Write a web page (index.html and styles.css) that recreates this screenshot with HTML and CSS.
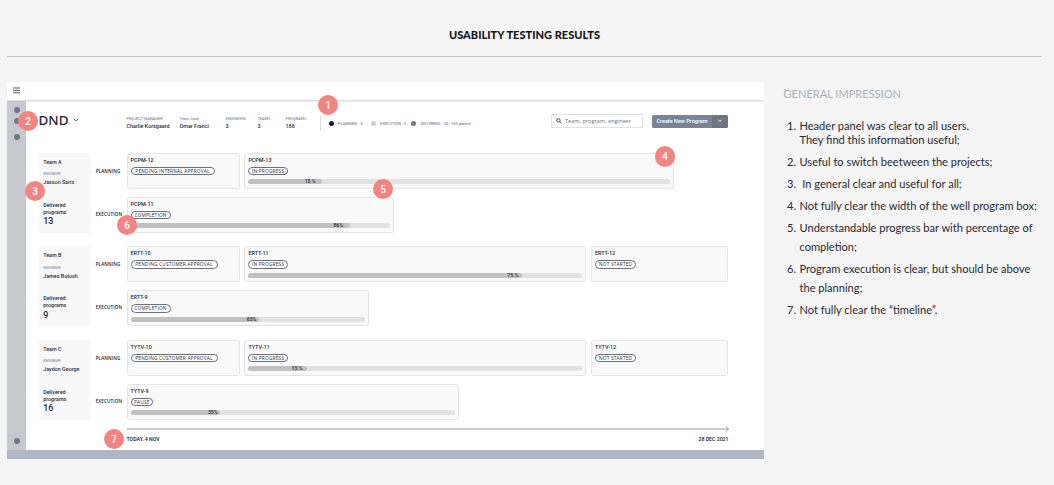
FILE: index.html
```
<!DOCTYPE html>
<html lang="en">
<head>
    <meta charset="UTF-8">
    <meta name="viewport" content="width=device-width, initial-scale=1.0">
    <title>Usability Testing Results</title>
    <link rel="stylesheet" href="styles.css">
</head>
<body>
    <header class="page-header">
        <h1>USABILITY TESTING RESULTS</h1>
    </header>

    <main class="content">
        <div class="app">
            <div class="topbar">
                <svg class="menu" viewBox="0 0 7 7"><path d="M0 1h7M0 3.4h7M0 5.8h7"/></svg>
            </div>

            <div class="app-body">
                <nav class="sidebar">
                    <span class="dot"></span>
                    <span class="dot"></span>
                    <span class="dot"></span>
                    <span class="dot"></span>
                </nav>

                <div class="workspace">
                    <div class="toolbar">
                        <div class="project">DND
                            <svg class="chevron" viewBox="0 0 6 4"><path d="M.7.7 3 3 5.3.7"/></svg>
                        </div>
                        <dl class="meta">
                            <div class="manager"><dt>PROJECT MANAGER</dt><dd>Charlie Korsgaard</dd></div>
                            <div class="lead"><dt>Team Lead</dt><dd>Omar Franci</dd></div>
                            <div class="engineers"><dt>ENGINEERS</dt><dd>3</dd></div>
                            <div class="teams-count"><dt>TEAMS</dt><dd>3</dd></div>
                            <div class="programs"><dt>PROGRAMS</dt><dd>186</dd></div>
                        </dl>
                        <ul class="legend">
                            <li class="planning">PLANNING - 3</li>
                            <li class="execution">EXECUTION - 3</li>
                            <li class="delivered">DELIVERED - 74 / 160 planed</li>
                        </ul>
                        <div class="search">
                            <svg viewBox="0 0 6 6"><circle cx="2.4" cy="2.4" r="1.7"/><path d="M3.7 3.7 5.4 5.4"/></svg>
                            <span>Team, program, engineer</span>
                        </div>
                        <div class="create">
                            <span class="create-label">Create New Program</span>
                            <span class="create-more"><svg class="chevron" viewBox="0 0 6 4"><path d="M1.2.7 3 2.5 4.8.7"/></svg></span>
                        </div>
                    </div>

                    <section class="team">
                        <div class="team-card">
                            <h2>Team A</h2>
                            <small>ENGINEER</small>
                            <p class="name">Jaxson Saris</p>
                            <p class="delivered-label">Delivered<br>programs</p>
                            <p class="count">13</p>
                        </div>
                        <div class="rows">
                            <div class="row">
                                <span class="phase">PLANNING</span>
                                <div class="card w-short"><h3>PCPM-12</h3><span class="pill pill-internal">PENDING INTERNAL APPROVAL</span></div>
                                <div class="card w-wide"><h3>PCPM-13</h3><span class="pill pill-progress">IN PROGRESS</span>
                                    <div class="bar"><div class="fill spaced" style="width: 17.5%">15 %</div></div></div>
                            </div>
                            <div class="row">
                                <span class="phase">EXECUTION</span>
                                <div class="card w-exec-a"><h3>PCPM-11</h3><span class="pill pill-completion">COMPLETION</span>
                                    <div class="bar"><div class="fill spaced" style="width: 84.6%">86%</div></div></div>
                            </div>
                        </div>
                    </section>

                    <section class="team">
                        <div class="team-card">
                            <h2>Team B</h2>
                            <small>ENGINEER</small>
                            <p class="name">James Botosh</p>
                            <p class="delivered-label">Delivered<br>programs</p>
                            <p class="count">9</p>
                        </div>
                        <div class="rows">
                            <div class="row">
                                <span class="phase">PLANNING</span>
                                <div class="card w-short"><h3>ERTT-10</h3><span class="pill pill-customer">PENDING CUSTOMER APPROVAL</span></div>
                                <div class="card w-mid"><h3>ERTT-11</h3><span class="pill pill-progress">IN PROGRESS</span>
                                    <div class="bar"><div class="fill" style="width: 82%">75 %</div></div></div>
                                <div class="card w-last"><h3>ERTT-12</h3><span class="pill pill-waiting">NOT STARTED</span></div>
                            </div>
                            <div class="row">
                                <span class="phase">EXECUTION</span>
                                <div class="card w-exec-b"><h3>ERTT-9</h3><span class="pill pill-completion">COMPLETION</span>
                                    <div class="bar"><div class="fill tight" style="width: 54.8%">65%</div></div></div>
                            </div>
                        </div>
                    </section>

                    <section class="team">
                        <div class="team-card">
                            <h2>Team C</h2>
                            <small>ENGINEER</small>
                            <p class="name">Jaydon George</p>
                            <p class="delivered-label">Delivered<br>programs</p>
                            <p class="count">16</p>
                        </div>
                        <div class="rows">
                            <div class="row">
                                <span class="phase">PLANNING</span>
                                <div class="card w-short"><h3>TYTV-10</h3><span class="pill pill-customer">PENDING CUSTOMER APPROVAL</span></div>
                                <div class="card w-mid"><h3>TYTV-11</h3><span class="pill pill-progress">IN PROGRESS</span>
                                    <div class="bar"><div class="fill" style="width: 17.4%">15 %</div></div></div>
                                <div class="card w-last"><h3>TYTV-12</h3><span class="pill pill-waiting">NOT STARTED</span></div>
                            </div>
                            <div class="row">
                                <span class="phase">EXECUTION</span>
                                <div class="card w-exec-c"><h3>TYTV-9</h3><span class="pill pill-pause">PAUSE</span>
                                    <div class="bar"><div class="fill tight" style="width: 27.6%">35%</div></div></div>
                            </div>
                        </div>
                    </section>

                    <div class="timeline">
                        <svg viewBox="0 0 602 6"><path d="M0 3h601.5M598.8.4 601.5 3 598.8 5.6"/></svg>
                        <div class="dates"><span>TODAY, 4 NOV</span><span>28 DEC 2021</span></div>
                    </div>
                </div>
            </div>
            <div class="app-footer"></div>

            <span class="badge badge-1">1</span>
            <span class="badge badge-2">2</span>
            <span class="badge badge-3">3</span>
            <span class="badge badge-4">4</span>
            <span class="badge badge-5">5</span>
            <span class="badge badge-6">6</span>
            <span class="badge badge-7">7</span>
        </div>

        <aside class="notes">
            <h2>GENERAL IMPRESSION</h2>
            <ol>
                <li class="compact"><span>1.</span><p>Header panel was clear to all users.<br>They find this information useful;</p></li>
                <li><span>2.</span><p>Useful to switch beetween the projects;</p></li>
                <li><span>3.</span><p>&nbsp;In general clear and useful for all;</p></li>
                <li><span>4.</span><p>Not fully clear the width of the well program box;</p></li>
                <li><span>5.</span><p>Understandable progress bar with percentage of<br>completion;</p></li>
                <li><span>6.</span><p>Program execution is clear, but should be above<br>the planning;</p></li>
                <li><span>7.</span><p>Not fully clear the “timeline”.</p></li>
            </ol>
        </aside>
    </main>
</body>
</html>
```
FILE: styles.css
```
* { box-sizing: border-box; margin: 0; padding: 0; }
body { background: #f5f5f5; font-family: Lato, sans-serif; color: #262a33; height: 485px; overflow: hidden; }
svg { display: block; fill: none; stroke: currentColor; }
ul, ol { list-style: none; }

.page-header { margin: 0 12px 0 7px; height: 57px; padding-top: 28px; border-bottom: 1px solid #c6c6c6; text-align: center; }
.page-header h1 { font-size: 11.05px; line-height: 14px; font-weight: 900; color: #15161a; }

.content { display: flex; padding: 25px 0 0 7px; }

/* app window */
.app { position: relative; width: 757px; height: 377px; display: flex; flex-direction: column; background: #fff; font-family: Roboto, sans-serif; color: #252c3a; flex: none; }
.topbar { height: 19px; padding: 5px 0 0 6px; border-bottom: 1px solid #dcdcde; box-shadow: 0 1px 1px #eee; }
.menu { width: 7px; height: 7px; color: #4c5464; stroke-width: 1; }
.app-body { flex: 1; display: flex; }
.sidebar { width: 19px; background: #c8c9ce; display: flex; flex-direction: column; align-items: center; padding: 6px 0 6.5px; }
.dot { width: 6px; height: 6px; border-radius: 50%; background: #6f7788; margin-bottom: 5px; }
.dot:nth-child(3) { margin-top: 5px; }
.dot:last-child { margin: auto 0 0; }
.app-footer { height: 9px; background: #b1b6c4; }
.workspace { flex: 1; padding: 12.5px 35.5px 0 12.5px; }

/* toolbar */
.toolbar { display: flex; height: 39px; align-items: flex-start; }
.project { width: 88px; margin-top: -.6px; display: flex; align-items: center; gap: 6px; font: 500 13.4px/15px "Noto Sans", sans-serif; color: #1f2533; }
.project .chevron { margin-left: -1.5px; }
.chevron { width: 6px; height: 4px; stroke-width: .9; color: #5d6576; }
.meta { display: flex; width: 194px; height: 15px; margin-top: 2px; border-right: 1px solid #d9dbe0; }
.meta dt { font-size: 3.9px; line-height: 5px; color: #6c7489; white-space: nowrap; }
.meta dd { margin-top: 2px; font-size: 5.4px; line-height: 7px; font-weight: 500; white-space: nowrap; }
.manager { width: 53px; }
.lead { width: 46px; }
.engineers { width: 32px; }
.teams-count { width: 28px; }
.legend { display: flex; width: 230.5px; padding: 7.5px 0 0 8px; font-size: 3.9px; line-height: 5px; color: #5f677b; }
.legend li { display: flex; align-items: center; gap: 4.5px; white-space: nowrap; }
.legend li::before { content: ""; width: 5px; height: 5px; border-radius: 50%; background: #161a24; }
.legend .planning { width: 42px; }
.legend .execution { width: 40.5px; }
.legend .execution::before { background: #cfd0d4; }
.legend .delivered::before { background: #6f7788; }
.search { width: 92px; height: 14px; margin-top: .5px; padding-left: 4px; display: flex; align-items: center; gap: 3px; border: 1px solid #e1e2e5; border-radius: 1px; font: 5.6px/8px "Open Sans", sans-serif; color: #6c7382; white-space: nowrap; }
.search svg { width: 6px; height: 6px; stroke-width: 1; color: #444c5b; }
.create { display: flex; width: 76px; height: 13px; margin: 1px 0 0 9px; border-radius: 1.5px; overflow: hidden; color: #fff; font-size: 5.5px; font-weight: 500; }
.create-label { flex: 1; background: #7c8398; line-height: 13px; text-align: center; white-space: nowrap; }
.create-more { width: 16px; display: grid; place-items: center; background: #6c7480; }
.create-more .chevron { color: #fff; stroke-width: 1; }

/* teams */
.team { display: flex; height: 80px; margin-bottom: 13.5px; }
.team-card { width: 52.5px; padding: 6.3px 4.7px 0; background: #f8f8f9; border-radius: 2px; font-size: 5.4px; line-height: 7px; font-weight: 500; white-space: nowrap; }
.team-card h2 { font-size: 5.4px; font-weight: 500; }
.team-card small { display: block; margin-top: 6.4px; font-size: 3.7px; line-height: 5px; font-weight: 400; color: #7b8396; }
.name { margin-top: 2px; }
.delivered-label { margin-top: 15.7px; }
.count { margin-top: .5px; font-size: 9px; line-height: 10px; }
.rows { display: flex; flex-direction: column; justify-content: space-between; }
.row { display: flex; height: 36px; gap: 4.5px; }
.phase { width: 31px; padding-left: 4.7px; font: 600 4.6px/36px "Open Sans", sans-serif; color: #1b202b; letter-spacing: .1px; }
.row:last-child .phase { line-height: 34.5px; }
.card { padding: 3px 3px 0; background: #f9f9f9; border: 1px solid #e4e5e7; border-radius: 2.5px; }
.card h3 { font-size: 5.4px; line-height: 7px; font-weight: 500; }
.w-short { width: 113.4px; }
.w-wide { width: 429.6px; }
.w-mid { width: 342px; }
.w-last { width: 137.5px; }
.w-exec-a { width: 267px; }
.w-exec-b { width: 242px; }
.w-exec-c { width: 332px; }
.pill { display: block; margin-top: 3px; height: 8.5px; border: 1px solid #6a707c; border-radius: 5px; background: #fff; font: 500 4.8px/6.5px "Open Sans", sans-serif; letter-spacing: .18px; text-align: center; white-space: nowrap; }
.pill-internal { width: 84px; }
.pill-customer { width: 87px; }
.pill-progress { width: 39.5px; }
.pill-completion { width: 40px; }
.pill-waiting { width: 41.5px; }
.pill-pause { width: 22.5px; }
.bar { height: 5px; margin-top: 4.3px; border-radius: 3px; background: #e2e2e2; }
.fill { height: 5px; padding-right: 4px; border-radius: 3px; background: #c0c0c0; font-size: 5.2px; line-height: 5.4px; font-weight: 500; text-align: right; }
.fill.spaced { padding-right: 6.5px; }
.fill.tight { padding-right: 2.3px; }

/* timeline */
.timeline { margin: -7px 0 0 88px; }
.timeline svg { width: 602px; height: 6px; color: #858c9d; stroke-width: .9; }
.dates { display: flex; justify-content: space-between; margin-top: 4px; font-size: 5.2px; line-height: 7px; font-weight: 500; color: #151923; }

/* numbered markers over the app window */
.badge { position: absolute; width: 20.4px; height: 20.4px; border-radius: 50%; background: #f28482; color: #fff; font-size: 10px; line-height: 21.5px; font-weight: 500; text-align: center; }
.badge-1 { left: 310.8px; top: 12.8px; }
.badge-2 { left: 10.8px; top: 28.9px; }
.badge-3 { left: 17.8px; top: 99.1px; }
.badge-4 { left: 648px; top: 64.2px; }
.badge-5 { left: 365.8px; top: 96.8px; }
.badge-6 { left: 109.9px; top: 132.8px; }
.badge-7 { left: 97px; top: 346.6px; }

/* notes */
.notes { padding: 5px 0 0 19.5px; white-space: nowrap; }
.notes h2 { font-size: 11.05px; line-height: 14px; font-weight: 400; color: #a9b1bc; }
.notes ol { margin: 18px 0 0 3.5px; font-size: 11.07px; }
.notes li { display: flex; line-height: 19px; margin-bottom: 3px; }
.notes li.compact { line-height: 14.4px; margin-bottom: 4px; }
.notes li span { width: 12.5px; }
```
